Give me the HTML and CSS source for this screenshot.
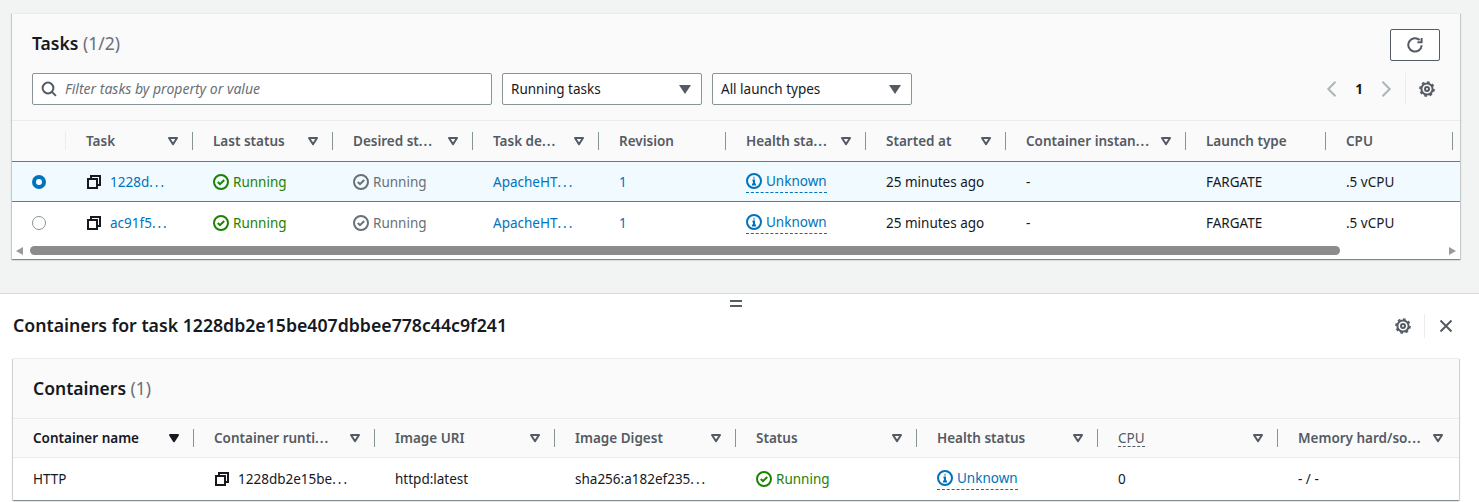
FILE: index.html
```html
<!DOCTYPE html>
<html lang="en">
<head>
<meta charset="utf-8">
<title>Tasks</title>
<link rel="stylesheet" href="styles.css">
</head>
<body>
<svg class="defs" width="0" height="0" aria-hidden="true">
  <symbol id="i-copy" viewBox="0 0 16 16"><path d="M2 5h9v9H2z"/><path d="M5 5V2h9v9h-3"/></symbol>
  <symbol id="i-ok" viewBox="0 0 16 16"><circle cx="8" cy="8" r="7"/><path d="m4.8 8 2.2 2.2 4.2-4.2"/></symbol>
  <symbol id="i-info" viewBox="0 0 16 16"><circle cx="8" cy="8" r="7"/><path d="M8 11.5V7.5H6.5"/><path d="M10 11.5H6"/><path d="M7.5 4.8h1"/></symbol>
  <symbol id="i-gear" viewBox="0 0 16 16"><circle cx="8" cy="8" r="5.6"/><circle class="teeth" cx="8" cy="8" r="7" pathLength="16"/><circle cx="8" cy="8" r="2"/></symbol>
  <symbol id="i-sort" viewBox="0 0 12 12"><path d="M2 3h8L6 9.2z"/></symbol>
</svg>

<main class="page">
  <section class="card tasks">
    <header class="card-head">
      <div class="title-row">
        <h2 class="card-title">Tasks <span class="count">(1/2)</span></h2>
        <button class="refresh" aria-label="Refresh"><svg class="icon" viewBox="0 0 16 16"><path d="M14.7 8.3A6.7 6.7 0 1 1 12.6 3"/><path d="M14.6 1v4.2h-4.2"/></svg></button>
      </div>
      <div class="filter-row">
        <div class="search"><svg class="icon" viewBox="0 0 16 16"><circle cx="7" cy="7" r="5.4"/><path d="m10.9 10.9 4 4"/></svg><span class="placeholder">Filter tasks by property or value</span></div>
        <div class="select">Running tasks<i class="caret"></i></div>
        <div class="select">All launch types<i class="caret"></i></div>
        <div class="pager">
          <svg class="icon chevron" viewBox="0 0 16 16"><path d="M11.5.8 4.3 8l7.2 7.2"/></svg>
          <b class="page-num">1</b>
          <svg class="icon chevron" viewBox="0 0 16 16"><path d="M4.5.8 11.7 8l-7.2 7.2"/></svg>
          <span class="vsep"></span>
          <svg class="icon" viewBox="0 0 16 16"><use href="#i-gear"/></svg>
        </div>
      </div>
    </header>

    <div class="row task-grid head-row">
      <div class="th first"></div>
      <div class="th">Task<svg class="sort"><use href="#i-sort"/></svg></div>
      <div class="th">Last status<svg class="sort"><use href="#i-sort"/></svg></div>
      <div class="th"><span>Desired st<span class="ell">...</span></span><svg class="sort"><use href="#i-sort"/></svg></div>
      <div class="th"><span>Task de<span class="ell">...</span></span><svg class="sort"><use href="#i-sort"/></svg></div>
      <div class="th">Revision</div>
      <div class="th"><span>Health sta<span class="ell">...</span></span><svg class="sort"><use href="#i-sort"/></svg></div>
      <div class="th">Started at<svg class="sort"><use href="#i-sort"/></svg></div>
      <div class="th"><span>Container instan<span class="ell">...</span></span><svg class="sort"><use href="#i-sort"/></svg></div>
      <div class="th">Launch type</div>
      <div class="th">CPU</div>
    </div>

    <div class="row task-grid body-row selected">
      <div class="td radio-cell"><span class="radio on"></span></div>
      <div class="td"><svg class="icon dark copy"><use href="#i-copy"/></svg><a class="link">1228d<span class="ell">...</span></a></div>
      <div class="td green"><svg class="icon status"><use href="#i-ok"/></svg>Running</div>
      <div class="td grey"><svg class="icon status"><use href="#i-ok"/></svg>Running</div>
      <div class="td"><a class="link">ApacheHT<span class="ell">...</span></a></div>
      <div class="td"><a class="link">1</a></div>
      <div class="td"><span class="health"><svg class="icon status"><use href="#i-info"/></svg>Unknown</span></div>
      <div class="td">25 minutes ago</div>
      <div class="td">-</div>
      <div class="td">FARGATE</div>
      <div class="td">.5 vCPU</div>
    </div>

    <div class="row task-grid body-row">
      <div class="td radio-cell"><span class="radio"></span></div>
      <div class="td"><svg class="icon dark copy"><use href="#i-copy"/></svg><a class="link">ac91f5<span class="ell">...</span></a></div>
      <div class="td green"><svg class="icon status"><use href="#i-ok"/></svg>Running</div>
      <div class="td grey"><svg class="icon status"><use href="#i-ok"/></svg>Running</div>
      <div class="td"><a class="link">ApacheHT<span class="ell">...</span></a></div>
      <div class="td"><a class="link">1</a></div>
      <div class="td"><span class="health"><svg class="icon status"><use href="#i-info"/></svg>Unknown</span></div>
      <div class="td">25 minutes ago</div>
      <div class="td">-</div>
      <div class="td">FARGATE</div>
      <div class="td">.5 vCPU</div>
    </div>

    <div class="scrollbar">
      <i class="arrow left"></i>
      <span class="thumb"></span>
      <i class="arrow right"></i>
    </div>
  </section>

  <section class="panel">
    <div class="handle"></div>
    <div class="panel-head">
      <h2 class="panel-title">Containers for task 1228db2e15be407dbbee778c44c9f241</h2>
      <div class="panel-tools">
        <svg class="icon" viewBox="0 0 16 16"><use href="#i-gear"/></svg>
        <span class="vsep"></span>
        <svg class="icon" viewBox="0 0 16 16"><path d="m2.5 2.5 11 11M13.5 2.5l-11 11"/></svg>
      </div>
    </div>
    <div class="card containers">
      <header class="containers-head">
        <h2 class="card-title">Containers <span class="count">(1)</span></h2>
      </header>
      <div class="row container-grid head-row">
        <div class="th sorted">Container name<svg class="sort solid"><use href="#i-sort"/></svg></div>
        <div class="th"><span>Container runti<span class="ell">...</span></span><svg class="sort"><use href="#i-sort"/></svg></div>
        <div class="th">Image URI<svg class="sort"><use href="#i-sort"/></svg></div>
        <div class="th">Image Digest<svg class="sort"><use href="#i-sort"/></svg></div>
        <div class="th">Status<svg class="sort"><use href="#i-sort"/></svg></div>
        <div class="th">Health status<svg class="sort"><use href="#i-sort"/></svg></div>
        <div class="th"><span class="dotted">CPU</span><svg class="sort"><use href="#i-sort"/></svg></div>
        <div class="th last"><span>Memory hard/so<span class="ell">...</span></span><svg class="sort"><use href="#i-sort"/></svg></div>
      </div>
      <div class="row container-grid body-row plain">
        <div class="td">HTTP</div>
        <div class="td"><svg class="icon dark copy"><use href="#i-copy"/></svg><span>1228db2e15be<span class="ell">...</span></span></div>
        <div class="td">httpd:latest</div>
        <div class="td"><span>sha256:a182ef235<span class="ell">...</span></span></div>
        <div class="td green"><svg class="icon status"><use href="#i-ok"/></svg>Running</div>
        <div class="td"><span class="health"><svg class="icon status"><use href="#i-info"/></svg>Unknown</span></div>
        <div class="td">0</div>
        <div class="td">- / -</div>
      </div>
    </div>
  </section>
</main>
</body>
</html>
```

FILE: styles.css
```css
* { box-sizing: border-box; }
html, body { margin: 0; height: 100%; }
body {
  background: #f2f3f3;
  color: #16191f;
  font-family: "Noto Sans", "Open Sans", sans-serif;
  font-size: 13.5px;
  line-height: 20px;
  overflow: hidden;
}
.defs { position: absolute; }
.page { padding-top: 13px; display: flex; flex-direction: column; }
h2 { margin: 0; }

.icon {
  width: 16px; height: 16px; flex: none;
  fill: none; stroke: #545b64; stroke-width: 2;
}
.teeth { stroke-width: 1.7; stroke-dasharray: 1 1; }

.card {
  background: #fff;
  box-shadow: 0 1px 1px 0 rgba(0, 28, 36, .3), 1px 1px 1px 0 rgba(0, 28, 36, .15), -1px 1px 1px 0 rgba(0, 28, 36, .15);
  border-top: 1px solid #eaeded;
}
.tasks { margin: 0 19px 0 12px; height: 246px; }
.card-head, .containers-head { background: #fafafa; }
.card-head { height: 107px; padding: 17px 20px 0; border-bottom: 1px solid #eaeded; }
.title-row { display: flex; justify-content: space-between; align-items: flex-start; height: 42px; }
.card-title { font-size: 17.5px; line-height: 24px; font-weight: 600; }
.count { font-weight: 400; color: #687078; }
.refresh {
  width: 50px; height: 32px; padding: 0; margin-top: -2px;
  display: flex; align-items: center; justify-content: center;
  background: #fff; border: 1px solid #545b64; border-radius: 2px;
}
.filter-row { display: flex; align-items: center; gap: 10px; height: 32px; }
.search, .select {
  height: 32px; background: #fff; border: 1px solid #879596; border-radius: 2px;
  display: flex; align-items: center;
}
.search { width: 460px; padding-left: 8px; gap: 8px; }
.placeholder { font-size: 14px; font-style: italic; color: #687078; }
.select { width: 200px; padding: 0 8px; justify-content: space-between; }
.caret { width: 0; height: 0; border: 6px solid transparent; border-top: 9px solid #545b64; border-bottom: 0; margin-right: 2px; }
.pager { margin-left: auto; display: flex; align-items: center; padding-right: 5px; }
.chevron { stroke: #aab7b8; }
.page-num { width: 38px; text-align: center; font-weight: 700; color: #16191f; }
.pager .vsep { margin: 0 13px 0 11px; }
.vsep { width: 1px; height: 32px; background: #eaeded; flex: none; }

.row { display: grid; }
.task-grid { grid-template-columns: 54px 127px 140px 140px 126px 127px 140px 140px 180px 140px 127px 7px; }
.container-grid { grid-template-columns: 181px 181px 180px 181px 181px 181px 180px 1fr; }

.head-row { height: 39px; background: #fafafa; align-items: center; border-bottom: 1px solid #eaeded; }
.tasks .head-row { height: 40px; border-bottom: 0; }
.th {
  height: 18px; padding: 0 13px 0 20px;
  border-right: 1px solid #879596;
  color: #545b64; font-weight: 600;
  display: flex; align-items: center; justify-content: space-between;
  white-space: nowrap;
}
.th .ell { letter-spacing: 1px; }
.ell { letter-spacing: 2px; }
.th.first { border-right-color: #eaeded; }
.th.sorted { color: #16191f; }
.th.last { border-right: 0; padding-right: 15px; }
.sort { width: 12px; height: 12px; flex: none; fill: none; stroke: #545b64; stroke-width: 2; stroke-linejoin: round; }
.sort.solid { fill: #16191f; stroke: #16191f; }
.dotted { font-weight: 400; border-bottom: 1px dashed #545b64; line-height: 16px; margin-top: 1px; }

.body-row { height: 41px; background: #fff; align-items: center; border-top: 1px solid transparent; border-bottom: 1px solid transparent; }
.body-row.selected { background: #f1faff; border-color: #00a1c9; }
.body-row.plain { border: 0; height: 42px; }
.td { padding-left: 20px; display: flex; align-items: center; white-space: nowrap; }
.radio-cell { padding-left: 20px; }
.link { color: #0073bb; }
.green { color: #1d8102; }
.green .icon { stroke: #1d8102; }
.grey { color: #687078; }
.grey .icon { stroke: #687078; }
.status { margin-right: 4px; }
.copy { margin-right: 8px; }
.dark { stroke: #16191f; }
.health {
  color: #0073bb; display: inline-flex; align-items: center;
  border-bottom: 1px dashed #0073bb; height: 23px; margin-top: -1px;
}
.health .icon { stroke: #0073bb; }
.radio { width: 14px; height: 14px; border: 1px solid #879596; border-radius: 50%; background: #fff; }
.radio.on { border: 4px solid #0073bb; }

.scrollbar { height: 15px; display: flex; align-items: center; background: #fff; padding: 0 3px; }
.thumb { height: 9px; width: 1310px; background: #8c8c8c; border-radius: 5px; margin-left: 7px; }
.arrow { width: 0; height: 0; border: 4px solid transparent; }
.arrow.left { border-right: 7px solid #9a9a9a; border-left: 0; margin-left: 1px; }
.arrow.right { border-left: 7px solid #9a9a9a; border-right: 0; margin-left: auto; margin-right: 1px; }

.panel {
  margin-top: 34px; height: 210px; background: #fff; border-top: 1px solid #d5dbdb;
  position: relative; padding: 0 20px 0 13px;
}
.handle { position: absolute; left: 730px; top: 6px; width: 12px; height: 7px; border-top: 2px solid #545b64; border-bottom: 2px solid #545b64; }
.panel-head { height: 64px; display: flex; align-items: center; justify-content: space-between; }
.panel-title { font-size: 17.7px; font-weight: 600; line-height: 24px; margin-top: -2px; }
.panel-tools { display: flex; align-items: center; gap: 13px; padding-right: 5px; margin-top: -1px; }
.panel-tools .vsep { height: 24px; }
.containers { height: 142px; border-top-color: #eaeded; }
.containers-head { height: 60px; padding: 17px 20px 0; border-bottom: 1px solid #eaeded; }
```
